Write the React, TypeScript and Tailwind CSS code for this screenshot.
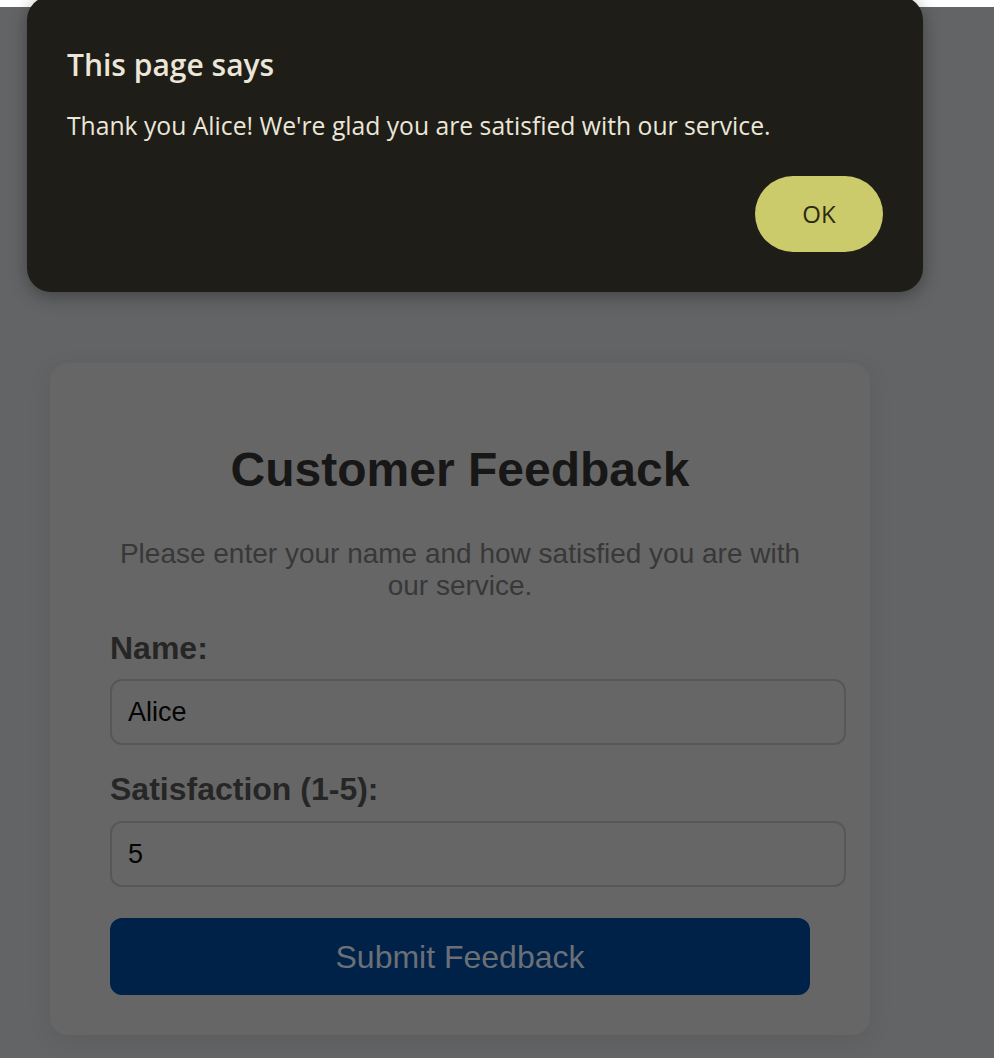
import React from "react";

export default function App() {
  return (
    <div className="relative min-h-[1058px] w-full overflow-hidden bg-[#636466]" style={{ fontFamily: '"Liberation Sans", Arial, sans-serif' }}>
      <div className="h-[7px] w-full bg-white" />
      <div className="pl-[50px] pt-[356px] pb-[23px]">
        <div className="box-border flex w-[820px] flex-col rounded-[18px] bg-[#666666] px-[60px] pt-[79px] pb-[40px] shadow-[0_6px_24px_rgba(0,0,0,0.08)]">
          <h1 className="text-center text-[48px] font-bold leading-[56px] text-[#171717]">Customer Feedback</h1>
          <p className="mt-[40px] text-center text-[28px] leading-[32px] text-[#383838]">
            Please enter your name and how satisfied you are with our service.
          </p>
          <label className="mt-[28px] block text-[32px] font-bold leading-[37px] text-[#262626]">Name:</label>
          <div className="mt-[12px] box-border flex h-[66px] w-[736px] items-center rounded-[12px] border-2 border-[#575757] px-[16px] text-[27px] text-[#050505]">
            Alice
          </div>
          <label className="mt-[26px] block text-[32px] font-bold leading-[37px] text-[#262626]">Satisfaction (1-5):</label>
          <div className="mt-[13px] box-border flex h-[66px] w-[736px] items-center rounded-[12px] border-2 border-[#575757] px-[16px] text-[27px] text-[#050505]">
            5
          </div>
          <button className="mt-[31px] flex h-[77px] w-[700px] items-center justify-center rounded-[12px] bg-[#002249] text-[32px] text-[#6b6f76]" style={{ fontFamily: '"Liberation Sans", Arial, sans-serif' }}>
            Submit Feedback
          </button>
        </div>
      </div>

      <div
        className="absolute left-[27px] top-[-4px] box-border flex h-[296px] w-[896px] flex-col rounded-[24px] bg-[#1e1d17] pl-[40px] pr-[40px] pt-[50px] shadow-[0_4px_18px_rgba(0,0,0,0.35)]"
        style={{ fontFamily: '"Open Sans", "Noto Sans", sans-serif' }}
      >
        <div className="text-[30px] font-semibold leading-[38px] text-[#ebe6d8]">This page says</div>
        <div className="mt-[27px] text-[24.7px] leading-[30px] text-[#ebe6d8]">
          Thank you Alice! We're glad you are satisfied with our service.
        </div>
        <div className="mt-[35px] flex justify-end">
          <button className="flex h-[76px] w-[128px] items-center justify-center rounded-full bg-[#cbcb6c] text-[24px] font-medium text-[#2a2a10]">
            OK
          </button>
        </div>
      </div>
    </div>
  );
}
